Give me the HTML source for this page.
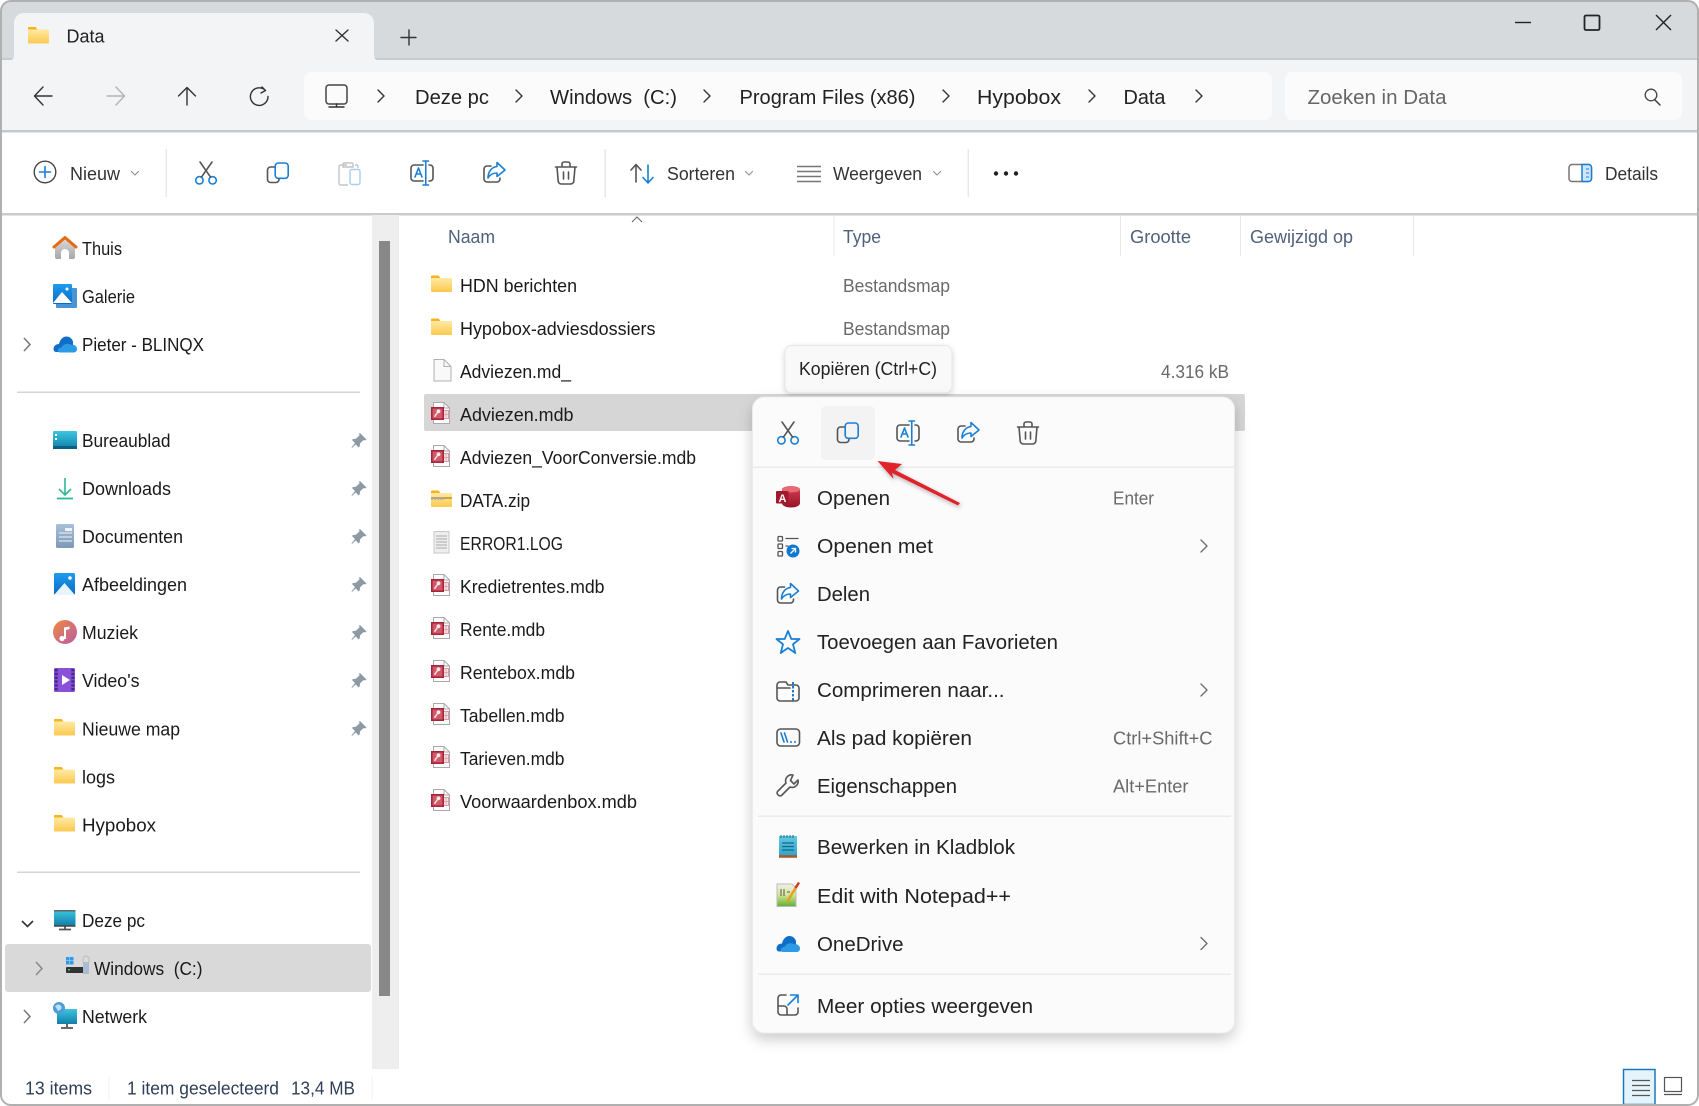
<!DOCTYPE html>
<html><head><meta charset="utf-8"><title>Data</title>
<style>html,body{margin:0;padding:0;background:#fff;width:1699px;height:1106px;overflow:hidden}svg{display:block}
text{font-family:"Liberation Sans",sans-serif;white-space:pre}
.s{font-size:18.5px;fill:#1a1a1a}.m{font-size:20px;fill:#222}.k{font-size:18.5px;fill:#6a6a6a}.h{font-size:18px;fill:#4f617b}.a{font-size:20.5px;fill:#222}.t{font-size:18px;fill:#333}.st{font-size:18px;fill:#2f3f57}
.g{fill:none;stroke:#555;stroke-width:1.6;stroke-linecap:round;stroke-linejoin:round}.b{fill:none;stroke:#1a7fd4;stroke-width:1.6;stroke-linecap:round;stroke-linejoin:round}.c{fill:none;stroke:#6e6e6e;stroke-width:1.4;stroke-linecap:round;stroke-linejoin:round}.c2{fill:none;stroke:#8f8f8f;stroke-width:1.1;stroke-linecap:round;stroke-linejoin:round}.d{fill:none;stroke:#333;stroke-width:1.4;stroke-linecap:round;stroke-linejoin:round}</style></head>
<body>
<svg width="1699" height="1106" viewBox="0 0 1699 1106" xmlns="http://www.w3.org/2000/svg">
<defs>
<linearGradient id="fg" x1="0" y1="0" x2="0" y2="1"><stop offset="0" stop-color="#ffeeb0"/><stop offset="1" stop-color="#fcc94e"/></linearGradient>
<linearGradient id="tl" x1="0" y1="0" x2="0" y2="1"><stop offset="0" stop-color="#3cc5e0"/><stop offset="1" stop-color="#0f7fa8"/></linearGradient>
<linearGradient id="kb" x1="0" y1="0" x2="0" y2="1"><stop offset="0" stop-color="#62c8e2"/><stop offset="1" stop-color="#35a3c8"/></linearGradient>
<linearGradient id="bl" x1="0" y1="0" x2="0" y2="1"><stop offset="0" stop-color="#1e9cf0"/><stop offset="1" stop-color="#0a6cc4"/></linearGradient>
<linearGradient id="ho" x1="0" y1="0" x2="0" y2="1"><stop offset="0" stop-color="#dedede"/><stop offset="1" stop-color="#a8a8a8"/></linearGradient>
<linearGradient id="mu" x1="0" y1="0" x2="1" y2="1"><stop offset="0" stop-color="#f08a3e"/><stop offset="1" stop-color="#b85ca8"/></linearGradient>
<linearGradient id="dc" x1="0" y1="0" x2="0" y2="1"><stop offset="0" stop-color="#a9bfd8"/><stop offset="1" stop-color="#7d99b8"/></linearGradient>
<linearGradient id="ac" x1="0" y1="0" x2="0" y2="1"><stop offset="0" stop-color="#d8404f"/><stop offset="1" stop-color="#96142a"/></linearGradient>
<linearGradient id="np" x1="0" y1="0" x2="0" y2="1"><stop offset="0" stop-color="#f0f0e8"/><stop offset=".45" stop-color="#d8e8a0"/><stop offset="1" stop-color="#60b030"/></linearGradient>
<filter id="ms" x="-10%" y="-10%" width="120%" height="120%"><feDropShadow dx="0" dy="6" stdDeviation="7" flood-color="#000" flood-opacity=".2"/></filter>
<filter id="ts" x="-10%" y="-20%" width="120%" height="150%"><feDropShadow dx="0" dy="2" stdDeviation="3" flood-color="#000" flood-opacity=".16"/></filter>
<filter id="as" x="-20%" y="-20%" width="150%" height="150%"><feDropShadow dx="1" dy="2" stdDeviation="2" flood-color="#000" flood-opacity=".3"/></filter>
<clipPath id="w"><rect x="1" y="1" width="1697" height="1104" rx="10"/></clipPath>

<g id="folder"><path d="M0 2a1 1 0 0 1 1-1h6l2 2h11a1 1 0 0 1 1 1v12a1 1 0 0 1-1 1H1a1 1 0 0 1-1-1z" fill="url(#fg)"/><path d="M0 1.500a1 1 0 0 1 1-1h6.500l2 2.500H0z" fill="#f9b21c"/></g>
<g id="mdb"><path d="M2.500 .5H13l5.500 5.500v15.500H2.500z" fill="#fdfdfd" stroke="#a9a9a9"/><path d="M13 .5V6h5.500" fill="none" stroke="#a9a9a9"/><rect x="12.500" y="8.500" width="5" height="8" fill="#f8e3e6" stroke="#dc9aa4"/><path d="M12.500 12.500H17.500M15 8.500V16.500" stroke="#dc9aa4" stroke-width=".7"/><rect x=".8" y="5.800" width="11.400" height="11.400" fill="#cf5a6a" stroke="#a8243a" stroke-width="1.600"/><circle cx="7.500" cy="9.300" r="1.900" fill="#fbe8ea"/><path d="M6.500 10.500 3.500 14.800" stroke="#fbe8ea" stroke-width="1.400"/></g>
<g id="pin"><path d="M9 0.500 15.500 7l-1.500 1-1.500-.5-3.500 3.500-.3 3-1 1-3-3L1 15.500l-.5-.5L4 10.500l-3-3 1-1 3-.3 3.500-3.500-.5-1.500z" fill="#8c9aa5"/></g>
<g id="cut"><circle cx="-6.600" cy="7.300" r="3.700" class="b"/><circle cx="6.600" cy="7.300" r="3.700" class="b"/><path d="M-6 -11 4.600 4.200M6 -11 -4.600 4.200" class="g"/></g>
<g id="copy"><path d="M-3.500 -6H-7.500a3 3 0 0 0-3 3v9.500a3 3 0 0 0 3 3H-2a3 3 0 0 0 3-3V5.500" class="g"/><rect x="-2.800" y="-10" width="13" height="15.300" rx="3" class="b"/></g>
<g id="ren"><path d="M1 -8H-8a3 3 0 0 0-3 3v10a3 3 0 0 0 3 3H1M7 -8h1a3 3 0 0 1 3 3v10a3 3 0 0 1-3 3H7" class="g"/><path d="M-7 4-3.500-5 0 4M-5.800 1H-1.200M1 -12H6.500M1 12H6.500M3.750 -12V12" class="b"/></g>
<g id="share"><path d="M-3 -7H-7a3 3 0 0 0-3 3V6a3 3 0 0 0 3 3H3a3 3 0 0 0 3-3V5" class="g"/><path d="M3 -10.500 11 -3 3 3.500V0C-1 0-4 1.500-6 5-6-1.500-2-6 3-6.500z" class="b"/></g>
<g id="trash"><path d="M-10.500 -6H10.500M-4 -6V-9a2 2 0 0 1 2-2H2a2 2 0 0 1 2 2V-6M-9 -6-7.800 8a3 3 0 0 0 3 3H4.800a3 3 0 0 0 3-3L9 -6M-2.500 -1V6M2.500 -1V6" class="g"/></g>
<g id="cloud"><path d="M0.500 13C0.500 10 3 8 6 8 7 3.500 10 0.500 13.500 0.500 16.500 0.500 19 2.500 20 5.500L20 10 9 16H3C1.500 16 .5 14.500 .5 13z" fill="#0f6fc8"/><path d="M7 16.500C5.500 16.500 4.500 15 5 13.500 5.500 12 7 11.500 8.500 11.500 10 8 15 6.500 18.500 9 21 8 24 10 24 13 24 15 22.500 16.500 21 16.500z" fill="#2c9ae6"/></g>
</defs>

<rect width="1699" height="1106" fill="#fff"/>
<g clip-path="url(#w)">
<rect width="1699" height="60" fill="#d6dadd"/>
<rect y="58" width="1699" height="2" fill="#c7cbce"/>
<rect y="60" width="1699" height="71" fill="#f3f4f6"/>
<rect y="130" width="1699" height="2.500" fill="#c6c9cc"/>
<rect y="213" width="1699" height="2.500" fill="#c9cbce"/>
<path d="M10 60C13 60 14 58 14 55V23a10 10 0 0 1 10-10H364a10 10 0 0 1 10 10V55C374 58 375 60 378 60z" fill="#f3f4f6"/>
<rect x="372" y="215" width="26" height="854" fill="#eeeeee"/>
<rect x="379" y="241" width="11" height="755" fill="#888888"/>
<rect x="398" y="215" width="1" height="854" fill="#ececec"/>
</g>

<!-- tab -->
<use href="#folder" x="28" y="26.500"/>
<text class="t" x="66.500" y="42.500" textLength="38" lengthAdjust="spacingAndGlyphs" font-size="18" style="fill:#222;font-weight:400">Data</text>
<path d="M336 30 348 41M348 30 336 41" class="d"/>
<path d="M409 30V45M401 37.500H416" class="d"/>
<!-- window controls -->
<path d="M1515 22.500H1531" stroke="#222" stroke-width="1.400"/>
<rect x="1584.500" y="15.500" width="15" height="14.500" rx="1.500" fill="none" stroke="#222" stroke-width="1.800"/>
<path d="M1656 15 1671 30M1671 15 1656 30" stroke="#222" stroke-width="1.400" fill="none"/>
<!-- nav -->
<path d="M52 96H35M43 87 34.500 96 43 105" class="d"/>
<path d="M107 96H124M116 87 124.500 96 116 105" fill="none" stroke="#b4b4b4" stroke-width="1.400" stroke-linecap="round" stroke-linejoin="round"/>
<path d="M187 105V88M178.500 96 187 87.500 195.500 96" class="d"/>
<path d="M265 90A8.800 8.800 0 1 0 268 96.500M262 87 265.500 90.500 261 93" class="d"/>
<rect x="304" y="72" width="968" height="48" rx="7" fill="#fbfbfc"/>
<rect x="1285" y="72" width="397" height="48" rx="7" fill="#fbfbfc"/>
<rect x="326" y="85" width="21" height="19" rx="3" fill="none" stroke="#444" stroke-width="1.500"/><path d="M336.500 104V107M329 107H344" class="d"/>
<g class="d"><path d="M378 90 384 96 378 102"/><path d="M516 90 522 96 516 102"/><path d="M704 90 710 96 704 102"/><path d="M943 90 949 96 943 102"/><path d="M1089 90 1095 96 1089 102"/><path d="M1196 90 1202 96 1196 102"/></g>
<text class="a" x="415" y="104" textLength="74" lengthAdjust="spacingAndGlyphs">Deze pc</text>
<text class="a" x="550" y="104" textLength="127" lengthAdjust="spacingAndGlyphs">Windows  (C:)</text>
<text class="a" x="739.500" y="104" textLength="176" lengthAdjust="spacingAndGlyphs">Program Files (x86)</text>
<text class="a" x="977" y="104" textLength="84" lengthAdjust="spacingAndGlyphs">Hypobox</text>
<text class="a" x="1123.500" y="104" textLength="42" lengthAdjust="spacingAndGlyphs">Data</text>
<text class="a" x="1307.500" y="104" textLength="139" lengthAdjust="spacingAndGlyphs" style="fill:#666">Zoeken in Data</text>
<circle cx="1651" cy="95" r="5.800" fill="none" stroke="#444" stroke-width="1.300"/><path d="M1655 100 1660 105" class="d"/>

<!-- toolbar -->
<circle cx="45" cy="172" r="10.800" fill="none" stroke="#444" stroke-width="1.400"/><path d="M45 166.500V177.500M39.500 172H50.500" class="b"/>
<text class="t" x="70" y="180" textLength="50" lengthAdjust="spacingAndGlyphs">Nieuw</text>
<path d="M131.500 171.500 135 175 138.500 171.500" class="c2"/>
<rect x="165.500" y="149" width="1.500" height="48" fill="#e9e9e9"/>
<use href="#cut" x="206" y="173"/><use href="#copy" x="278" y="173"/>
<path d="M347 165H340.500a1.500 1.500 0 0 0-1.500 1.500V183.500a1.500 1.500 0 0 0 1.500 1.500H348M344 163H352a1 1 0 0 1 1 1V167H343V164a1 1 0 0 1 1-1zM355 165H356.500a1.500 1.500 0 0 1 1.500 1.500V168" fill="none" stroke="#c4c4c4" stroke-width="1.400"/>
<rect x="350" y="169.500" width="10" height="15" rx="2" fill="none" stroke="#a8cdec" stroke-width="1.400"/>
<use href="#ren" x="422" y="173"/><use href="#share" x="494" y="173"/><use href="#trash" x="566" y="173"/>
<rect x="604.500" y="149" width="1.500" height="48" fill="#e9e9e9"/>
<path d="M636 182V164.500M631 170 636 164.500 641 170" class="g"/><path d="M648 165V183M643 177.500 648 183 653 177.500" class="b"/>
<text class="t" x="667" y="180" textLength="68" lengthAdjust="spacingAndGlyphs">Sorteren</text>
<path d="M745.500 171.500 749 175 752.500 171.500" class="c2"/>
<path d="M797 166.500H821M797 171.500H821M797 176.500H821M797 181.500H821" stroke="#777" stroke-width="1.600"/>
<text class="t" x="833" y="180" textLength="89" lengthAdjust="spacingAndGlyphs">Weergeven</text>
<path d="M933.500 171.500 937 175 940.500 171.500" class="c2"/>
<rect x="967.500" y="149" width="1.500" height="48" fill="#e9e9e9"/>
<circle cx="996" cy="173.500" r="2.200" fill="#222"/><circle cx="1006" cy="173.500" r="2.200" fill="#222"/><circle cx="1016" cy="173.500" r="2.200" fill="#222"/>
<rect x="1569" y="164.500" width="22.500" height="17" rx="3" fill="none" stroke="#777" stroke-width="1.500"/><path d="M1582 164.500H1588.500a3 3 0 0 1 3 3V178.500a3 3 0 0 1-3 3H1582z" fill="#cfe6fa" stroke="#1a7fd4" stroke-width="1.500"/><path d="M1586 169H1589M1586 173H1589M1586 177H1589" stroke="#1a7fd4"/>
<text class="t" x="1605" y="180" textLength="53" lengthAdjust="spacingAndGlyphs">Details</text>

<!-- sidebar -->
<rect x="5" y="944" width="366" height="48" rx="3" fill="#d9d9d9"/>
<path d="M55 245.500 65 236.500 75 245.500V257a2 2 0 0 1-2 2H69V253a4 4 0 0 0-8 0V259H57a2 2 0 0 1-2-2z" fill="url(#ho)"/>
<path d="M54 247 65 237.500 76 247" fill="none" stroke="#e66a10" stroke-width="3" stroke-linecap="round" stroke-linejoin="round"/>
<rect x="56" y="288" width="21" height="20" rx="1" fill="#4a93d4"/><rect x="53" y="284" width="19" height="20" rx="1" fill="url(#bl)"/><path d="M53 303 62 292 72 303z" fill="#fff"/><circle cx="67" cy="289" r="1.500" fill="#fff"/>
<use href="#cloud" x="53" y="336"/>
<path d="M24 338 30 344.500 24 351" fill="none" stroke="#777" stroke-width="1.500"/>
<rect x="17" y="391.500" width="343" height="1.500" fill="#d4d4d4"/>
<rect x="53" y="431" width="24" height="18" rx="1" fill="url(#tl)"/><rect x="53" y="446" width="24" height="3" fill="#0b5f80"/><rect x="55" y="434" width="2" height="2" fill="#fff"/><rect x="55" y="438" width="2" height="2" fill="#fff"/>
<path d="M65 478V495M59 489 65 495 71 489" fill="none" stroke="#2fb898" stroke-width="1.600"/><path d="M57 498.500H73" stroke="#2fb898" stroke-width="1.800"/>
<rect x="56" y="524" width="18" height="24" rx="1.500" fill="url(#dc)"/><path d="M59 533H72M59 537H72M59 541H72" stroke="#f0f4f8"/><rect x="65" y="528" width="7" height="3" fill="#f0f4f8"/>
<rect x="54" y="573" width="21" height="22" rx="1.500" fill="url(#bl)"/><path d="M54 595 64.500 583 75 595z" fill="#e9f4fc"/><circle cx="70" cy="578" r="1.800" fill="#fff"/>
<circle cx="65" cy="632" r="12" fill="url(#mu)"/><path d="M64 639V627.500L69.500 626.500V629L66 630V639" fill="#fff"/><circle cx="62" cy="638.500" r="2.600" fill="#fff"/>
<rect x="54" y="668" width="21" height="24" rx="1.500" fill="#8a50d8"/><path d="M56.200 669V691M72.800 669V691" stroke="#3e2a90" stroke-width="3" stroke-dasharray="2.400 1.400"/><path d="M62 675 70 680 62 685z" fill="#fff"/>
<use href="#folder" x="54" y="718.500"/><use href="#folder" x="54" y="766.500"/><use href="#folder" x="54" y="814.500"/>
<rect x="54" y="910" width="21.500" height="16" rx="1" fill="url(#tl)"/><rect x="54" y="910" width="21.500" height="1.500" fill="#666"/><path d="M65 926V929M59 929.500H71" stroke="#555" stroke-width="1.800"/><path d="M54 926H75.500" stroke="#444" stroke-width="1.500"/>
<g fill="#2a9bf0"><rect x="66" y="957" width="3.500" height="3.500"/><rect x="70" y="957" width="3.500" height="3.500"/><rect x="66" y="961" width="3.500" height="3.500"/><rect x="70" y="961" width="3.500" height="3.500"/></g>
<rect x="66" y="967" width="18" height="6" rx="1" fill="#333"/><rect x="68" y="969" width="2" height="1.500" fill="#3c6"/><rect x="83" y="962" width="6" height="12" fill="#a9bdd0"/><path d="M83 962V959a3 3 0 0 1 6 0V962" fill="none" stroke="#bbb" stroke-width="1"/>
<rect x="57" y="1009" width="20" height="15" fill="url(#tl)"/><path d="M67 1024V1027M61 1028H73" stroke="#555" stroke-width="1.800"/><circle cx="59" cy="1008" r="6" fill="#4d9ed8"/><path d="M55 1006q4-3 6 0t-3 5" fill="#bfe0f5"/>
<path d="M22 921 27.500 926.500 33 921" fill="none" stroke="#333" stroke-width="1.600"/>
<path d="M36 962 42 968.500 36 975" fill="none" stroke="#888" stroke-width="1.500"/>
<path d="M24 1010 30 1016.500 24 1023" fill="none" stroke="#777" stroke-width="1.500"/>
<use href="#pin" x="351" y="432.500"/><use href="#pin" x="351" y="480.500"/><use href="#pin" x="351" y="528.500"/><use href="#pin" x="351" y="576.500"/><use href="#pin" x="351" y="624.500"/><use href="#pin" x="351" y="672.500"/><use href="#pin" x="351" y="720.500"/>
<text class="s" x="82" y="255" textLength="40" lengthAdjust="spacingAndGlyphs">Thuis</text>
<text class="s" x="82" y="303" textLength="53" lengthAdjust="spacingAndGlyphs">Galerie</text>
<text class="s" x="82" y="351" textLength="122" lengthAdjust="spacingAndGlyphs">Pieter - BLINQX</text>
<text class="s" x="82" y="447" textLength="88.500" lengthAdjust="spacingAndGlyphs">Bureaublad</text>
<text class="s" x="82" y="495" textLength="89" lengthAdjust="spacingAndGlyphs">Downloads</text>
<text class="s" x="82" y="543" textLength="101" lengthAdjust="spacingAndGlyphs">Documenten</text>
<text class="s" x="82" y="591" textLength="105" lengthAdjust="spacingAndGlyphs">Afbeeldingen</text>
<text class="s" x="82" y="639" textLength="56" lengthAdjust="spacingAndGlyphs">Muziek</text>
<text class="s" x="82" y="687" textLength="57.500" lengthAdjust="spacingAndGlyphs">Video's</text>
<text class="s" x="82" y="735.500" textLength="98" lengthAdjust="spacingAndGlyphs">Nieuwe map</text>
<text class="s" x="82" y="783.500" textLength="33" lengthAdjust="spacingAndGlyphs">logs</text>
<text class="s" x="82" y="831.500" textLength="74" lengthAdjust="spacingAndGlyphs">Hypobox</text>
<text class="s" x="82" y="927" textLength="63" lengthAdjust="spacingAndGlyphs">Deze pc</text>
<text class="s" x="94" y="975" textLength="108.500" lengthAdjust="spacingAndGlyphs">Windows  (C:)</text>
<text class="s" x="82" y="1023" textLength="65" lengthAdjust="spacingAndGlyphs">Netwerk</text>
<rect x="17" y="871.500" width="343" height="1.500" fill="#d4d4d4"/>

<!-- status -->
<text class="st" x="25" y="1094.500" textLength="67" lengthAdjust="spacingAndGlyphs">13 items</text>
<text class="st" x="127" y="1094.500" textLength="152" lengthAdjust="spacingAndGlyphs">1 item geselecteerd</text>
<text class="st" x="291" y="1094.500" textLength="64" lengthAdjust="spacingAndGlyphs">13,4 MB</text>
<rect x="108" y="1077" width="1.500" height="23" fill="#f5f5f5"/><rect x="371.500" y="1077" width="1.500" height="23" fill="#f5f5f5"/>
<rect x="1623.500" y="1069.500" width="31.500" height="35" fill="#e5f3fb" stroke="#1a78c2" stroke-width="1.500"/>
<path d="M1632 1080.500H1650M1632 1085.500H1650M1632 1090.500H1650M1632 1095.500H1650" stroke="#555" stroke-width="1.200"/>
<rect x="1664.500" y="1077.500" width="17" height="14" fill="none" stroke="#555" stroke-width="1.200"/><path d="M1664 1094.500H1682" stroke="#555" stroke-width="1.200"/>

<!-- file list headers -->
<path d="M632 222 637 217 642 222" fill="none" stroke="#666" stroke-width="1"/>
<text class="h" x="448" y="243" textLength="47" lengthAdjust="spacingAndGlyphs">Naam</text>
<text class="h" x="843" y="243" textLength="38" lengthAdjust="spacingAndGlyphs">Type</text>
<text class="h" x="1130" y="243" textLength="61" lengthAdjust="spacingAndGlyphs">Grootte</text>
<text class="h" x="1250" y="243" textLength="103" lengthAdjust="spacingAndGlyphs">Gewijzigd op</text>
<g fill="#e8e8e8"><rect x="833.500" y="215" width="1" height="41"/><rect x="1120" y="215" width="1" height="41"/><rect x="1240" y="215" width="1" height="41"/><rect x="1413" y="215" width="1" height="41"/></g>

<!-- files -->
<rect x="424" y="394" width="821" height="37" rx="2" fill="#d6d6d6"/>
<use href="#folder" x="431" y="275"/><use href="#folder" x="431" y="318"/>
<path d="M434 359.500H444L451 366.500V381H434z" fill="#f9f9f9" stroke="#b0b0b0"/><path d="M444 359.500V366.500H451" fill="none" stroke="#b0b0b0"/>
<use href="#mdb" x="431" y="402"/><use href="#mdb" x="431" y="445"/>
<use href="#folder" x="431" y="490"/><path d="M431 498H452" stroke="#c9a24a" stroke-width="2"/><path d="M431 498.500H444" stroke="#aaa" stroke-width="2.500" stroke-dasharray="2 1"/>
<path d="M434 531.500H449V553H434z" fill="#eee" stroke="#c8c8c8"/><path d="M436 536H447M436 539H447M436 542H447M436 545H447M436 548H447" stroke="#aaa"/>
<use href="#mdb" x="431" y="574"/><use href="#mdb" x="431" y="617"/><use href="#mdb" x="431" y="660"/><use href="#mdb" x="431" y="703"/><use href="#mdb" x="431" y="746"/><use href="#mdb" x="431" y="789"/>
<text class="s" x="460" y="292" textLength="117" lengthAdjust="spacingAndGlyphs">HDN berichten</text>
<text class="s" x="460" y="335" textLength="195.500" lengthAdjust="spacingAndGlyphs">Hypobox-adviesdossiers</text>
<text class="s" x="460" y="378" textLength="111" lengthAdjust="spacingAndGlyphs">Adviezen.md_</text>
<text class="s" x="460" y="421" textLength="113.500" lengthAdjust="spacingAndGlyphs">Adviezen.mdb</text>
<text class="s" x="460" y="464" textLength="236" lengthAdjust="spacingAndGlyphs">Adviezen_VoorConversie.mdb</text>
<text class="s" x="460" y="507" textLength="70" lengthAdjust="spacingAndGlyphs">DATA.zip</text>
<text class="s" x="460" y="550" textLength="103" lengthAdjust="spacingAndGlyphs">ERROR1.LOG</text>
<text class="s" x="460" y="593" textLength="144.500" lengthAdjust="spacingAndGlyphs">Kredietrentes.mdb</text>
<text class="s" x="460" y="636" textLength="85" lengthAdjust="spacingAndGlyphs">Rente.mdb</text>
<text class="s" x="460" y="679" textLength="115" lengthAdjust="spacingAndGlyphs">Rentebox.mdb</text>
<text class="s" x="460" y="722" textLength="104.500" lengthAdjust="spacingAndGlyphs">Tabellen.mdb</text>
<text class="s" x="460" y="765" textLength="104.500" lengthAdjust="spacingAndGlyphs">Tarieven.mdb</text>
<text class="s" x="460" y="808" textLength="177" lengthAdjust="spacingAndGlyphs">Voorwaardenbox.mdb</text>
<text class="k" x="843" y="292" textLength="107" lengthAdjust="spacingAndGlyphs">Bestandsmap</text>
<text class="k" x="843" y="335" textLength="107" lengthAdjust="spacingAndGlyphs">Bestandsmap</text>
<text class="k" x="1161" y="378" textLength="68" lengthAdjust="spacingAndGlyphs">4.316 kB</text>

<!-- tooltip -->
<rect x="785" y="345.500" width="167" height="47.500" rx="7" fill="#f9f9f9" stroke="#e6e6e6" filter="url(#ts)"/>
<text class="t" x="799" y="375" textLength="138" lengthAdjust="spacingAndGlyphs" style="fill:#222">Kopiëren (Ctrl+C)</text>

<!-- context menu -->
<rect x="752.500" y="397" width="482" height="636" rx="12" fill="#fbfbfb" stroke="#ececec" filter="url(#ms)"/>
<rect x="821" y="406" width="54" height="54" rx="5" fill="#f3f3f3"/>
<rect x="753" y="466.500" width="481" height="1.500" fill="#ebebeb"/>
<rect x="758" y="815.500" width="473" height="1.500" fill="#ebebeb"/>
<rect x="758" y="973.500" width="473" height="1.500" fill="#ebebeb"/>
<use href="#cut" x="788" y="433"/><use href="#copy" x="848" y="433"/><use href="#ren" x="908" y="433"/><use href="#share" x="968" y="433"/><use href="#trash" x="1028" y="433"/>

<!-- arrow -->
<g filter="url(#as)"><path d="M877.500 461 902 464 895 470 960 503 958 505.500 892 473 893.500 479z" fill="#e0202a"/></g>

<!-- menu icons -->
<path d="M782 489.500C782 485 800 485 800 489.500V503C800 509 782 509 782 503z" fill="url(#ac)"/><ellipse cx="791" cy="489.500" rx="9" ry="3" fill="#e86a75"/>
<rect x="776" y="491" width="12.500" height="12.500" rx="1" fill="#a3182b"/><text x="778.500" y="502" font-size="11" font-weight="700" style="fill:#fff">A</text>
<g class="g" style="stroke-width:1.300"><rect x="778" y="536.500" width="4.500" height="4.500" rx=".8"/><rect x="778" y="544" width="4.500" height="4.500" rx=".8"/><rect x="778" y="551.500" width="4.500" height="4.500" rx=".8"/><path d="M786 538.500H798M786 546H788"/></g>
<circle cx="793" cy="551" r="6.500" fill="#0f78d4"/><path d="M790.500 553.500 795.500 548.500M791.500 548.500H795.500V552.500" fill="none" stroke="#fff" stroke-width="1.300"/>
<use href="#share" x="787.500" y="594"/>
<path d="M788 631 791.300 639H799.500L793 644.300 795.300 653 788 648 780.700 653 783 644.300 776.500 639H784.700z" class="b" style="stroke-width:1.800"/>
<path d="M777 685a3 3 0 0 1 3-3h6l2 3h8a3 3 0 0 1 3 3v10a3 3 0 0 1-3 3H780a3 3 0 0 1-3-3z" class="g"/><path d="M777 688H790" class="g"/><path d="M793 682V701" stroke="#1a7fd4" stroke-width="2" stroke-dasharray="2.500 1.500"/>
<rect x="777" y="729" width="22.500" height="17" rx="3.500" class="g"/><path d="M781 733 784 742M784.500 733 787.500 742" class="b"/><circle cx="791" cy="742" r="1" fill="#1a7fd4"/><circle cx="795" cy="742" r="1" fill="#1a7fd4"/>
<path d="M793 775a6 6 0 0 0-7 8L777.500 791.500a3 3 0 0 0 4 4L790 787a6 6 0 0 0 8-7L794 784 790.500 780.500z" class="g"/>
<rect x="779" y="836" width="18" height="20" fill="url(#kb)"/><path d="M779 856.500H797" stroke="#a8562a" stroke-width="2.400"/><path d="M781 835V838M784 835V838M787 835V838M790 835V838M793 835V838" stroke="#0e6a8c" stroke-width="1"/><path d="M782 843H794M782 846.500H794M782 850H794" stroke="#0e6a8c" stroke-width="1.200"/>
<path d="M777 884H792L796 888V906.500H777z" fill="url(#np)" stroke="#bbb"/><path d="M781 889V896M784 889V896M787 892H790" stroke="#555"/><path d="M787 902 798 884" stroke="#e8a020" stroke-width="2.500"/><path d="M795.500 888 799 882.500" stroke="#d23c2a" stroke-width="2.500"/>
<use href="#cloud" x="776" y="935.500"/>
<path d="M786 995H781a3 3 0 0 0-3 3V1012a3 3 0 0 0 3 3H795a3 3 0 0 0 3-3V1008M778 1006H784a3 3 0 0 1 3 3V1015" class="g"/><path d="M788 1005 797.500 995.500M790.500 995H798V1002.500" class="b"/>
<path d="M1201 540 1207 546 1201 552" class="c"/><path d="M1201 684 1207 690 1201 696" class="c"/><path d="M1201 937.500 1207 943.500 1201 949.500" class="c"/>

<text class="m" x="817" y="505" textLength="73" lengthAdjust="spacingAndGlyphs">Openen</text>
<text class="m" x="817" y="553" textLength="116" lengthAdjust="spacingAndGlyphs">Openen met</text>
<text class="m" x="817" y="601" textLength="53" lengthAdjust="spacingAndGlyphs">Delen</text>
<text class="m" x="817" y="649" textLength="241" lengthAdjust="spacingAndGlyphs">Toevoegen aan Favorieten</text>
<text class="m" x="817" y="697" textLength="187.500" lengthAdjust="spacingAndGlyphs">Comprimeren naar...</text>
<text class="m" x="817" y="745" textLength="155" lengthAdjust="spacingAndGlyphs">Als pad kopiëren</text>
<text class="m" x="817" y="793" textLength="140" lengthAdjust="spacingAndGlyphs">Eigenschappen</text>
<text class="m" x="817" y="854" textLength="198" lengthAdjust="spacingAndGlyphs">Bewerken in Kladblok</text>
<text class="m" x="817" y="903" textLength="194" lengthAdjust="spacingAndGlyphs">Edit with Notepad++</text>
<text class="m" x="817" y="951" textLength="86.500" lengthAdjust="spacingAndGlyphs">OneDrive</text>
<text class="m" x="817" y="1013" textLength="216" lengthAdjust="spacingAndGlyphs">Meer opties weergeven</text>
<text class="k" x="1113" y="504.500" textLength="41" lengthAdjust="spacingAndGlyphs">Enter</text>
<text class="k" x="1113" y="744.500" textLength="99.500" lengthAdjust="spacingAndGlyphs">Ctrl+Shift+C</text>
<text class="k" x="1113" y="792.500" textLength="75.500" lengthAdjust="spacingAndGlyphs">Alt+Enter</text>

<!-- window border -->
<rect x="1" y="1" width="1697" height="1104" rx="10" fill="none" stroke="#b0b0b0" stroke-width="2"/>
</svg>
</body></html>
